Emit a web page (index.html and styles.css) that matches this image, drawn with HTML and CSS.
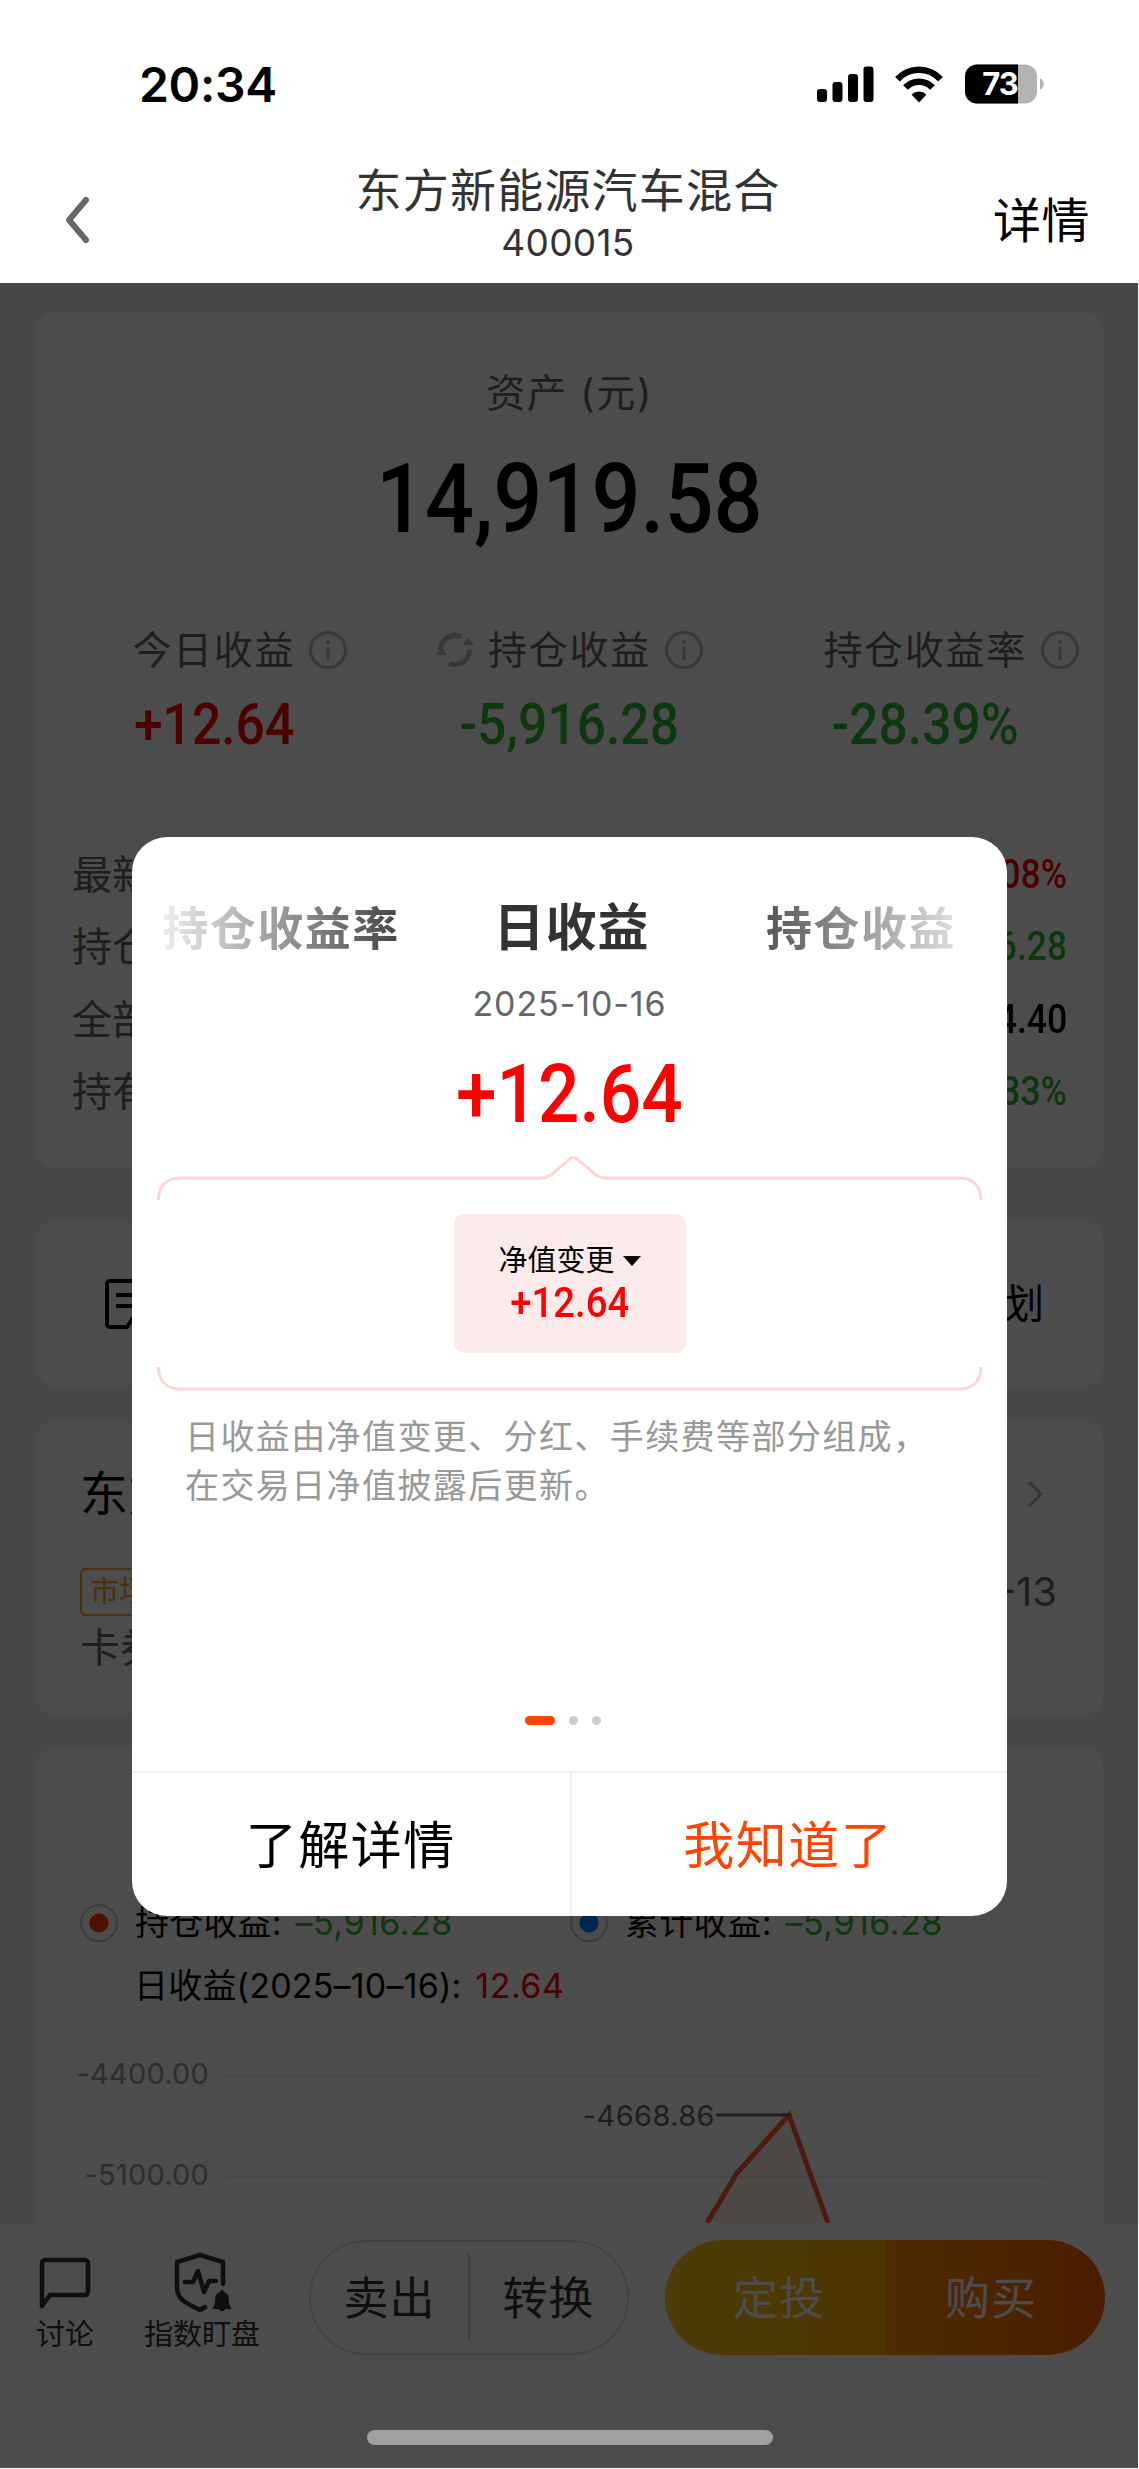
FILE: index.html
```
<!DOCTYPE html>
<html lang="zh-CN">
<head>
  <meta charset="UTF-8" />
  <meta name="viewport" content="width=device-width, initial-scale=1.0" />
  <title>东方新能源汽车混合</title>
  <link rel="stylesheet" href="styles.css">
</head>
<body>
  <div class="app">
    <header class="header">
      <div class="status-bar">
        <span class="time">20:34</span>
        <svg class="status-icons" width="230" height="44" viewBox="0 0 230 44">
          <rect x="3" y="27" width="10" height="13" rx="3"/>
          <rect x="18.500" y="20" width="10" height="20" rx="3"/>
          <rect x="34" y="12" width="10" height="28" rx="3"/>
          <rect x="49.500" y="4.500" width="10" height="35.500" rx="3"/>
          <g fill="none" stroke="#000" stroke-width="6.500">
            <path d="M83.500 17.300a29 29 0 0 1 43 0"/>
            <path d="M91.500 25.500a18.500 18.500 0 0 1 27 0"/>
          </g>
          <path d="M97.500 32.500a11 11 0 0 1 15 0L105 40.500z"/>
          <rect x="151" y="2.500" width="72" height="39" rx="12" fill="#b3b3b3"/>
          <path d="M163 2.500h41v39h-41a12 12 0 0 1-12-12v-15a12 12 0 0 1 12-12z"/>
          <path d="M226 16.500c5 1.500 5 9.500 0 11z" fill="#b3b3b3"/>
          <text x="186" y="33" class="battery-text">73</text>
        </svg>
      </div>
      <div class="nav">
        <svg class="back" width="32" height="52" viewBox="0 0 32 52"><path d="M25 6 8 26l17 20"/></svg>
        <div class="nav-title">
          <h1>东方新能源汽车混合</h1>
          <p>400015</p>
        </div>
        <a class="nav-link">详情</a>
      </div>
    </header>

    <main class="content">
      <section class="card asset">
        <p class="asset-label">资产 (元)</p>
        <p class="asset-total"><span class="num">14,919.58</span></p>
        <div class="stats">
          <div class="stat">
            <p class="stat-label">今日收益
              <svg class="info" width="40" height="40" viewBox="0 0 40 40"><circle cx="20" cy="20" r="17.500"/><path d="M20 17v13M20 10v4"/></svg>
            </p>
            <p class="stat-value red"><span class="num">+12.64</span></p>
          </div>
          <div class="stat">
            <p class="stat-label">
              <svg class="refresh" width="40" height="40" viewBox="0 0 40 40"><path d="M5.500 20A14.500 14.500 0 0 1 26 6.800M34.500 20a14.500 14.500 0 0 1-20.500 13.200"/><path class="tip" d="M28 15h11l-7-8zM1 25h11l-5-8z"/></svg>
              持仓收益
              <svg class="info" width="40" height="40" viewBox="0 0 40 40"><circle cx="20" cy="20" r="17.500"/><path d="M20 17v13M20 10v4"/></svg>
            </p>
            <p class="stat-value green"><span class="num">-5,916.28</span></p>
          </div>
          <div class="stat">
            <p class="stat-label">持仓收益率
              <svg class="info" width="40" height="40" viewBox="0 0 40 40"><circle cx="20" cy="20" r="17.500"/><path d="M20 17v13M20 10v4"/></svg>
            </p>
            <p class="stat-value green"><span class="num">-28.39%</span></p>
          </div>
        </div>
        <div class="details">
          <div class="row"><span>最新</span><b class="num red">08%</b></div>
          <div class="row"><span>持仓</span><b class="num green">6.28</b></div>
          <div class="row"><span>全部</span><b class="num">4.40</b></div>
          <div class="row"><span>持有</span><b class="num green">33%</b></div>
        </div>
      </section>

      <section class="card links">
        <svg width="52" height="52" viewBox="0 0 52 52"><path d="M46 22V6a3 3 0 0 0-3-3H6a3 3 0 0 0-3 3v40a3 3 0 0 0 3 3h17l8-12M12 17h24M12 28h18"/></svg>
        <span>计划</span>
      </section>

      <section class="card market">
        <div class="market-head">
          <h2>东方</h2>
          <svg width="20" height="30" viewBox="0 0 20 30"><path d="M4 3l12 12L4 27"/></svg>
        </div>
        <div class="market-row">
          <span class="tag">市场</span>
          <span class="date">-13</span>
        </div>
        <p class="coupon">卡券</p>
      </section>

      <section class="card trend">
        <div class="legend">
          <div class="legend-item"><i class="dot orange"></i>持仓收益: <em class="green">–5,916.28</em></div>
          <div class="legend-item"><i class="dot blue"></i>累计收益: <em class="green">–5,916.28</em></div>
        </div>
        <p class="legend-day">日收益(2025–10–16): <em class="red">12.64</em></p>
        <svg class="chart" width="1067" height="217" viewBox="0 0 1067 217">
          <path class="grid" d="M190 70h819M190 171h819"/>
          <text class="axis" x="173" y="78">-4400.00</text>
          <text class="axis" x="173" y="179">-5100.00</text>
          <path class="area" d="M671 217l30-50 52-58 39 108z"/>
          <path class="line" d="M671 217l30-50 52-58 39 108"/>
          <path class="mark" d="M680 109h73"/>
          <text class="peak" x="679" y="120">-4668.86</text>
        </svg>
      </section>
    </main>

    <footer class="toolbar">
      <div class="tool tool-chat">
        <svg width="56" height="64" viewBox="0 0 56 64"><path d="M5 55V12a3 3 0 0 1 3-3h40a3 3 0 0 1 3 3v29a3 3 0 0 1-3 3H13z"/></svg>
        <span>讨论</span>
      </div>
      <div class="tool tool-watch">
        <svg width="64" height="64" viewBox="0 0 64 64">
          <path d="M53 33V11L30 4 7 11v25c0 12 8 16 23 23l5-3M15 31h8l5-11 6 21 5-11h7"/>
          <path class="bell" d="M42 58c3-3 3-6 3-9 0-5 2-7 5-8 1-3 3-3 4 0 3 1 5 3 5 8 0 3 0 6 3 9h-7c-1 3-5 3-6 0z"/>
        </svg>
        <span>指数盯盘</span>
      </div>
      <div class="pill pill-line"><button>卖出</button><button>转换</button></div>
      <div class="pill pill-fill"><button>定投</button><button>购买</button></div>
    </footer>

    <div class="mask"></div>
    <div class="home-bar"></div>

    <div class="modal">
      <div class="modal-body">
        <div class="tabs">
          <span class="tab fade-left">持仓收益率</span>
          <span class="tab active">日收益</span>
          <span class="tab fade-right">持仓收益</span>
        </div>
        <p class="modal-date">2025-10-16</p>
        <p class="modal-value red"><span class="num">+12.64</span></p>
        <div class="bracket">
          <svg class="bracket-line" width="826" height="236" viewBox="0 0 826 236">
            <path d="M1.500 44c0-14 8-22 22-22H383c9 0 13-4 19-10l12-10c2-1.500 3-1.500 5 0l12 10c6 6 10 10 19 10H802c14 0 22 8 22 22M1.500 211c0 14 8 22 22 22H802c14 0 22-8 22-22"/>
          </svg>
          <div class="change">
            <p>净值变更 <i class="caret"></i></p>
            <p class="change-value red"><span class="num">+12.64</span></p>
          </div>
        </div>
        <p class="desc">日收益由净值变更、分红、手续费等部分组成，<br>在交易日净值披露后更新。</p>
        <div class="pager"><i class="on"></i><i></i><i></i></div>
      </div>
      <div class="modal-actions">
        <button>了解详情</button>
        <button class="primary">我知道了</button>
      </div>
    </div>
  </div>
</body>
</html>
```

FILE: styles.css
```
* {
  box-sizing: border-box;
}

body {
  margin: 0;
  font-family: Inter, "Noto Sans CJK SC", sans-serif;
  color: #000;
  background: #fff;
}

h1, h2, p {
  margin: 0;
  font-weight: 400;
}

i, em {
  font-style: normal;
}

button {
  padding: 0;
  border: none;
  background: none;
  font-family: inherit;
  color: inherit;
}

.app {
  position: relative;
  width: 1139px;
  height: 2469px;
  overflow: hidden;
}

.num {
  display: inline-block;
  vertical-align: top;
  font-family: Roboto, sans-serif;
  font-weight: 550;
  transform: scaleX(0.89);
}

.red { color: #f00; }
.green { color: #32b932; }

/* header */
.header {
  height: 283px;
}

.status-bar {
  display: flex;
  justify-content: space-between;
  padding: 62px 95px 0 139px;
}

.time {
  font-size: 48px;
  line-height: 46px;
  font-weight: 600;
  letter-spacing: -0.3px;
}

.battery-text {
  font-size: 31px;
  font-weight: 700;
  letter-spacing: -1px;
  fill: #fff;
  text-anchor: middle;
}

.nav {
  display: flex;
  justify-content: space-between;
  align-items: flex-start;
  padding: 54px 49px 0 61px;
}

.back {
  margin-top: 32px;
  fill: none;
  stroke: #666;
  stroke-width: 6;
  stroke-linecap: round;
  stroke-linejoin: round;
}

.nav-title {
  margin-left: 50px;
  text-align: center;
  color: #333;
}

.nav-title h1 {
  font-size: 46px;
  line-height: 56px;
  letter-spacing: 1.2px;
}

.nav-title p {
  margin-top: 3px;
  font-size: 37px;
  line-height: 44px;
  letter-spacing: 0.3px;
}

.nav-link {
  margin-top: 31px;
  font-size: 48px;
  line-height: 56px;
  letter-spacing: 0.5px;
}

/* content */
.content {
  height: 1941px;
  padding: 29px 36px 0;
  background: #f2f2f2;
  overflow: hidden;
}

.card {
  background: #fff;
  border-radius: 20px;
  overflow: hidden;
}

.asset {
  padding-top: 56px;
  text-align: center;
}

.asset-label,
.stat-label {
  font-size: 39px;
  line-height: 50px;
  letter-spacing: 1.7px;
  color: #666;
}

.asset-total {
  margin-top: 31px;
  font-size: 97px;
  line-height: 100px;
}

.stats {
  display: grid;
  grid-template-columns: repeat(3, 1fr);
  margin-top: 76px;
}

.stat-label {
  display: flex;
  justify-content: center;
  align-items: center;
}

.stat-value {
  margin-top: 19px;
  font-size: 58px;
  line-height: 60px;
}

.info,
.refresh {
  flex: none;
  fill: none;
  stroke: #bbb;
  stroke-width: 3;
}

.info {
  margin: 0 -53px 0 13px;
}

.refresh {
  margin: 0 13px 0 -53px;
  stroke-width: 5;
}

.refresh .tip {
  fill: #bbb;
  stroke: none;
}

.details {
  margin-top: 53px;
  padding: 32px 36px 40px;
  background: #fdfdfd;
}

.row {
  display: flex;
  justify-content: space-between;
  align-items: center;
  height: 72.25px;
  font-size: 40px;
  line-height: 50px;
  color: #666;
}

.row .num {
  color: #000;
  transform-origin: right;
}

.row .red { color: #f00; }
.row .green { color: #32b932; }

.links {
  display: flex;
  justify-content: space-between;
  align-items: center;
  height: 165px;
  margin-top: 53px;
  padding: 0 59px 0 68px;
  font-size: 40px;
  line-height: 50px;
}

.links svg {
  fill: none;
  stroke: #000;
  stroke-width: 4;
}

.market {
  height: 294px;
  margin-top: 35px;
  padding: 43px 46px 0 44px;
}

.market-head,
.market-row {
  display: flex;
  justify-content: space-between;
  align-items: center;
}

.market-head {
  padding-right: 12px;
}

.market-head h2 {
  font-size: 48px;
  line-height: 60px;
}

.market-head svg {
  fill: none;
  stroke: #b3b3b3;
  stroke-width: 3;
}

.market-row {
  height: 48px;
  margin-top: 44px;
}

.tag {
  padding: 0 8px;
  border: 2px solid #ffa024;
  border-radius: 6px;
  font-size: 29px;
  line-height: 44px;
  color: #ffa024;
}

.date,
.coupon {
  font-size: 40px;
  line-height: 50px;
  color: #666;
}

.coupon {
  margin-top: 7px;
}

.trend {
  margin-top: 33px;
  padding: 155px 0 40px;
  font-size: 34px;
  line-height: 40px;
  letter-spacing: 0.2px;
}

.trend em {
  margin-left: 4px;
  letter-spacing: 0.5px;
}

.legend {
  display: flex;
  padding-left: 44px;
}

.legend-item {
  display: flex;
  align-items: center;
  width: 490px;
  white-space: pre;
}

.dot {
  width: 38px;
  height: 38px;
  margin-right: 17px;
  border: 2px solid #ccc;
  border-radius: 50%;
}

.dot.orange { background: radial-gradient(circle, #ff4400 9px, transparent 10px); }
.dot.blue { background: radial-gradient(circle, #0084ff 9px, transparent 10px); }

.legend-day {
  margin-top: 23px;
  padding-left: 98px;
}

.chart {
  display: block;
}

.chart text {
  font-size: 29px;
  text-anchor: end;
}

.chart .axis { fill: #999; }
.chart .peak { fill: #666; letter-spacing: 0.4px; }
.chart .grid { stroke: #eee; stroke-width: 2; }
.chart .mark { stroke: #666; stroke-width: 3; }
.chart .area { fill: #ff4400; fill-opacity: 0.08; }
.chart .line { fill: none; stroke: #ff5a2d; stroke-width: 5; }

/* bottom toolbar */
.toolbar {
  display: flex;
  align-items: flex-start;
  height: 245px;
  padding: 16px 34px 0 35px;
  background: #fff;
}

.tool {
  display: flex;
  flex-direction: column;
  align-items: center;
  padding-top: 11px;
  font-size: 29px;
  line-height: 36px;
  color: #333;
}

.tool svg {
  fill: none;
  stroke: #333;
  stroke-width: 4.5;
  stroke-linecap: round;
  stroke-linejoin: round;
}

.tool .bell {
  fill: #333;
  stroke: none;
}

.tool span {
  margin-top: 2px;
}

.tool-chat {
  width: 60px;
}

.tool-watch {
  width: 116px;
  margin-left: 49px;
}

.pill {
  display: flex;
  height: 115px;
  border-radius: 58px;
  overflow: hidden;
}

.pill button {
  flex: 1;
  padding-bottom: 4px;
  font-size: 45px;
  letter-spacing: 1px;
}

.pill-line {
  width: 320px;
  margin-left: 49px;
  padding: 12px 0;
  border: 2px solid #ddd;
  color: #333;
}

.pill-line button + button {
  border-left: 2px solid #ccc;
}

.pill-fill {
  width: 440px;
  margin-left: 36px;
  color: #fff;
}

.pill-fill button:first-child {
  padding-left: 8px;
  background: linear-gradient(90deg, #ffc81e, #ffb400);
}

.pill-fill button:last-child {
  padding-right: 8px;
  background: linear-gradient(90deg, #ff9600, #ff6000);
}

/* mask and dialog */
.mask {
  position: absolute;
  top: 283px;
  right: 1px;
  bottom: 1px;
  left: 0;
  background: rgba(0, 0, 0, 0.7);
}

.home-bar {
  position: absolute;
  left: 367px;
  bottom: 24px;
  width: 406px;
  height: 15px;
  border-radius: 8px;
  background: #a0a0a0;
}

.modal {
  position: absolute;
  top: 837px;
  left: 132px;
  display: flex;
  flex-direction: column;
  width: 875px;
  height: 1079px;
  border-radius: 35px;
  background: #fff;
  overflow: hidden;
}

.modal-body {
  flex: 1;
  padding: 61px 26px 0;
  text-align: center;
}

.tabs {
  display: grid;
  grid-template-columns: 240px 1fr 194px;
  align-items: center;
  height: 60px;
  padding: 0 23px 0 3px;
  white-space: nowrap;
}

.tab {
  font-size: 46px;
  line-height: 60px;
  font-weight: 600;
  letter-spacing: 1.5px;
  color: transparent;
  background-clip: text;
}

.fade-left { background-image: linear-gradient(90deg, #eee, #444); }
.fade-right { background-image: linear-gradient(90deg, #555, #e0e0e0); }

.tab.active {
  padding-right: 22px;
  font-size: 51px;
  font-weight: 700;
  letter-spacing: 1px;
  color: #333;
}

.modal-date {
  margin-top: 24px;
  font-size: 34px;
  line-height: 44px;
  letter-spacing: 0.9px;
  color: #666;
}

.modal-value {
  margin-top: 28px;
  font-size: 82px;
  line-height: 80px;
}

.bracket {
  position: relative;
  height: 236px;
  margin-top: 22px;
  padding-top: 58px;
}

.bracket-line {
  position: absolute;
  top: 0;
  left: -1px;
  fill: none;
  stroke: #fcd5d5;
  stroke-width: 3;
}

.change {
  width: 232px;
  height: 139px;
  margin: 0 auto;
  padding-top: 29px;
  border-radius: 10px;
  background: #fdebeb;
  font-size: 29px;
  line-height: 36px;
}

.caret {
  display: inline-block;
  vertical-align: 5px;
  border: 9px solid transparent;
  border-top: 10px solid #000;
  border-bottom: 0;
}

.change-value {
  margin-top: 1px;
  font-size: 43px;
  line-height: 44px;
}

.desc {
  margin-top: 21px;
  padding-left: 27px;
  font-size: 34px;
  line-height: 48.5px;
  letter-spacing: 1.4px;
  text-align: left;
  white-space: nowrap;
  color: #999;
}

.pager {
  display: flex;
  justify-content: center;
  gap: 14px;
  margin: 206px 13px 0 0;
}

.pager i {
  width: 9px;
  height: 9px;
  border-radius: 5px;
  background: #ccc;
}

.pager .on {
  width: 30px;
  background: #ff4400;
}

.modal-actions {
  display: grid;
  grid-template-columns: 1fr 1fr;
  height: 145px;
  border-top: 2px solid #f0f0f0;
}

.modal-actions button {
  padding-bottom: 5px;
  font-size: 51px;
  letter-spacing: 1.5px;
}

.modal-actions .primary {
  border-left: 2px solid #f0f0f0;
  padding-right: 2px;
  color: #ff4400;
}
```
